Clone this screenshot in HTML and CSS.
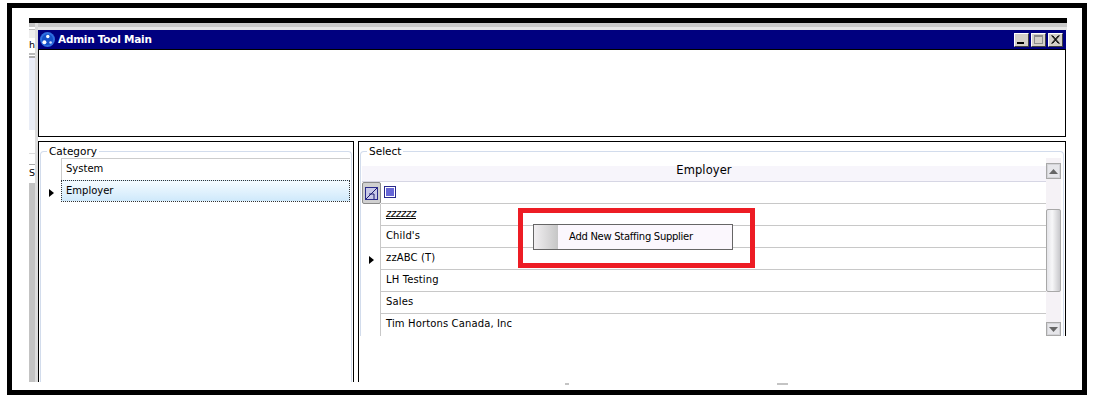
FILE: index.html
```html
<!DOCTYPE html>
<html lang="en">
<head>
<meta charset="utf-8">
<title>Admin Tool Main</title>
<link rel="stylesheet" href="styles.css">
</head>
<body>
<div class="frame">
  <div class="topbar"></div>
  <div class="shot">
    <div class="strip">
      <div class="strip-a"></div>
      <div class="strip-b">h</div>
      <div class="strip-c"></div>
      <div class="strip-d"></div>
      <div class="strip-e">S</div>
      <div class="strip-f"></div>
    </div>
    <div class="window">
      <div class="titlebar">
        <svg class="app-icon" width="15" height="15" viewBox="0 0 15 15">
          <circle cx="7.5" cy="7.5" r="7.5" fill="#2f6fe0"/>
          <circle cx="7.5" cy="7.5" r="5.5" fill="#1450c8"/>
          <circle cx="7.8" cy="4.5" r="1.7" fill="#fff"/>
          <circle cx="4.4" cy="10.2" r="2" fill="#fff"/>
          <circle cx="10.6" cy="10.5" r="1.3" fill="#cfdcff"/>
        </svg>
        <span class="title">Admin Tool Main</span>
        <div class="controls">
          <div class="ctl"><svg width="15" height="13" viewBox="0 0 15 13"><rect x="3" y="9" width="7" height="2" fill="#000"/></svg></div>
          <div class="ctl"><svg width="15" height="13" viewBox="0 0 15 13"><rect x="3.5" y="2.5" width="8" height="8" fill="none" stroke="#8d8d8d"/><rect x="3" y="2" width="9" height="2" fill="#8d8d8d"/></svg></div>
          <div class="ctl"><svg width="15" height="13" viewBox="0 0 15 13"><path d="M3.5 2.5l7 8M10.5 2.5l-7 8M4.5 2.5l7 8M11.5 2.5l-7 8" stroke="#000" fill="none"/></svg></div>
        </div>
      </div>
      <div class="top-box"></div>
      <div class="panels">
        <section class="category">
          <div class="group">
            <span class="legend">Category</span>
            <div class="cat-list">
              <div class="cat-row"><span class="cat-mark"></span><div class="cat-cell">System</div></div>
              <div class="cat-row"><span class="cat-mark"><i class="arrow"></i></span><div class="cat-cell selected">Employer</div></div>
            </div>
          </div>
        </section>
        <section class="select">
          <div class="select-inner">
            <div class="group group-select">
              <span class="legend">Select</span>
              <div class="grid-wrap">
                <div class="grid">
                  <div class="grid-head">Employer</div>
                  <div class="row tool-row">
                    <div class="marker tool-btn">
                      <svg width="13" height="13" viewBox="0 0 13 13"><rect x=".5" y=".5" width="12" height="12" fill="#c9c9e8" stroke="#2a2a8c"/><path d="M1 12L12 1M4 7h5v5" stroke="#1c1c70" fill="none"/></svg>
                    </div>
                    <div class="cell"><span class="check"></span></div>
                  </div>
                  <div class="row"><div class="marker"></div><div class="cell"><u class="strike">zzzzzz</u></div></div>
                  <div class="row"><div class="marker"></div><div class="cell">Child's</div></div>
                  <div class="row"><div class="marker"><i class="arrow arrow-grid"></i></div><div class="cell">zzABC (T)</div></div>
                  <div class="row"><div class="marker"></div><div class="cell">LH Testing</div></div>
                  <div class="row"><div class="marker"></div><div class="cell">Sales</div></div>
                  <div class="row row-last"><div class="marker"></div><div class="cell">Tim Hortons Canada, Inc</div></div>
                  <div class="callout">
                    <div class="menu-item"><span class="menu-gutter"></span><span class="menu-label">Add New Staffing Supplier</span></div>
                  </div>
                </div>
                <div class="scrollbar">
                  <div class="sb-btn"><svg width="9" height="5" viewBox="0 0 9 5"><path d="M4.5 0L9 5H0z" fill="#666"/></svg></div>
                  <div class="sb-track sb-gap-a"></div>
                  <div class="sb-thumb"></div>
                  <div class="sb-track sb-gap-b"></div>
                  <div class="sb-btn sb-down"><svg width="9" height="5" viewBox="0 0 9 5"><path d="M0 0h9L4.500 5z" fill="#666"/></svg></div>
                </div>
              </div>
            </div>
          </div>
        </section>
      </div>
    </div>
  </div>
  <div class="foot"><span class="dash dash-a"></span><span class="dash dash-b"></span></div>
</div>
</body>
</html>
```
FILE: styles.css
```css
* { box-sizing: border-box; }
html, body { margin: 0; padding: 0; background: #fff; }
body { width: 1093px; height: 402px; overflow: hidden; font-family: "DejaVu Sans", sans-serif; font-size: 10px; color: #000; padding: 3px 0 0 7px; }

.frame { width: 1080px; height: 392px; border: 5px solid #000; padding: 10px 15px 0 17px; background: #fff; }
.topbar { height: 5px; background: #000; width: 1038px; }
.shot { display: flex; height: 359px; width: 1038px; }

.strip { width: 6px; flex: none; display: flex; flex-direction: column; font-size: 9.5px; line-height: 12px; background: #fff; }
.strip-a { height: 15px; background: linear-gradient(#c4c4c4 0 4px, #fff 4px 6px, #bbb 6px 7px, #eee 7px); }
.strip-b { height: 15px; padding-top: 1px; }
.strip-c { height: 7px; background: linear-gradient(#bbb 0 2px, #fff 2px 3px, #aaa 3px 5px, #eef 5px); }
.strip-d { height: 105px; background: linear-gradient(#e9edf6 0 70px, #fff 70px 93px, #ddd 93px 94px, #fff 94px 104px, #aaa 104px 105px); }
.strip-e { height: 12px; line-height: 13px; margin-top: 1px; }
.strip-f { flex: 1; background: #c3c3c3; margin-top: 5px; }

.window { width: 1032px; flex: none; background: #fff; display: flex; flex-direction: column; border-left: 3px solid #dcdcdc; box-shadow: inset 0 4px 0 #c9c9c9, inset 0 7px 0 #e6e6e6; padding-top: 7px; }

.titlebar { height: 19px; width: 1028px; background: #00007f; display: flex; align-items: center; padding: 0 3px 0 2px; flex: none; }
.app-icon { flex: none; }
.title { color: #fff; font-weight: bold; font-size: 10.5px; margin: -2px 0 0 3px; letter-spacing: -.25px; }
.controls { margin-left: auto; display: flex; gap: 2px; }
.ctl { width: 15px; height: 14px; background: #d4d0c8; border: 1px solid; border-color: #fff #404040 #404040 #fff; display: flex; align-items: center; justify-content: center; }
.ctl svg { flex: none; margin: -1px; }

.top-box { height: 88px; width: 1028px; border: 1px solid #000; flex: none; background: #fff; }
.panels { display: flex; gap: 4px; margin-top: 4px; flex: 1; min-height: 0; width: 1028px; }

.category { width: 316px; flex: none; border: 1px solid #000; border-bottom: 0; padding: 9px 1px 0; }
.group { position: relative; border: 1px solid #d2dcec; border-bottom: 0; border-radius: 4px 4px 0 0; height: 100%; }
.legend { position: absolute; z-index: 1; left: 6px; top: -7px; padding: 0 2px; background: #fff; font-size: 10.5px; line-height: 12px; }

.cat-list { padding-top: 6px; }
.cat-row { display: flex; height: 22px; }
.cat-mark { width: 20px; flex: none; display: flex; align-items: center; justify-content: center; }
.cat-cell { width: 289px; padding: 3px 4px; line-height: 14px; border-top: 1px solid #ccc; border-left: 1px solid #ccc; }
.cat-cell.selected { border: 1px dotted #333; background: linear-gradient(#f4fbff, #cfe9fb); height: 22px; }

.arrow { display: block; width: 0; height: 0; margin-top: 4px; border-left: 5px solid #000; border-top: 4.5px solid transparent; border-bottom: 4.5px solid transparent; }
.arrow-grid { margin-top: 2px; }

.select { flex: 1; border-top: 1px solid #000; border-left: 1px solid #000; min-width: 0; }
.select-inner { height: 194px; border-right: 1px solid #000; padding: 9px 1px 0; }
.group-select { height: 100%; }
.grid-wrap { display: flex; padding: 1px 2px 0 1px; height: 100%; overflow: hidden; }

.grid { position: relative; width: 684px; flex: none; overflow: hidden; }
.grid-head { height: 29px; padding-top: 9px; line-height: 16px; text-align: center; font-size: 11.5px; letter-spacing: .1px; background: linear-gradient(#fff 0 13px, #f7f5fb 13px); border-bottom: 1px solid #d6d6e4; }
.row { display: flex; height: 22px; }
.marker { width: 19px; flex: none; border-right: 1px solid #c8c8c8; display: flex; align-items: center; justify-content: center; }
.tool-btn { background: #d0d0d0; border: 1px solid #8a8a8a; border-radius: 2px; }
.cell { flex: 1; padding-left: 5px; line-height: 19px; border-bottom: 1px solid #c8c8c8; white-space: nowrap; letter-spacing: .13px; }
.row-last .cell { border-bottom: 0; }
.tool-row .cell { padding-left: 3px; display: flex; align-items: center; }
.check { display: block; width: 12px; height: 12px; border: 1px solid #2a2a8c; padding: 1px; background: #6666d6; background-clip: content-box; margin-top: -1px; }
.strike { font-style: italic; letter-spacing: -.25px; }

.callout { position: absolute; left: 156px; top: 55px; width: 237px; height: 60px; border: 5px solid #ed1c24; padding: 11px 0 0 10px; }
.menu-item { display: flex; width: 200px; height: 26px; border: 1px solid #666; background: #fbf7fd; align-items: stretch; }
.menu-gutter { width: 24px; flex: none; background: linear-gradient(90deg, #f1eff1, #c6c6c6); }
.menu-label { margin-left: 11px; line-height: 24px; white-space: nowrap; letter-spacing: -.28px; }

.scrollbar { width: 15px; flex: none; margin: 5px 1px 0 0; padding-top: 5px; display: flex; flex-direction: column; background: #f5f2f6; }
.sb-btn { height: 16px; flex: none; border: 1px solid #a8a8a8; background: #e6e6ea; box-shadow: inset 0 0 0 1px #d4d4d8; display: flex; align-items: center; justify-content: center; }
.sb-gap-a { height: 30px; flex: none; }
.sb-thumb { height: 83px; flex: none; border: 1px solid #a8a8a8; border-radius: 2px; background: linear-gradient(90deg, #e4e4e8, #f7f7f9 40%, #c8c8cc); }
.sb-gap-b { height: 30px; flex: none; }
.sb-down { height: 14px; }

.foot { display: flex; height: 5px; padding-top: 1px; }
.dash { display: block; height: 2px; background: #c4c4c4; }
.dash-a { width: 4px; margin-left: 536px; }
.dash-b { width: 11px; margin-left: 208px; }
```
